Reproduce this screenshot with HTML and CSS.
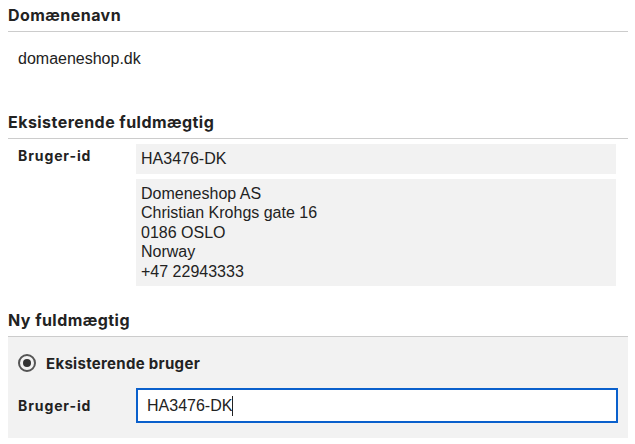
FILE: index.html
```html
<!DOCTYPE html>
<html lang="da">
<head>
    <meta charset="UTF-8">
    <meta name="viewport" content="width=device-width, initial-scale=1.0">
    <title>Skift fuldmægtig</title>
    <link rel="stylesheet" href="styles.css">
</head>
<body>
    <div class="container">
        <h2>Domænenavn</h2>
        <p class="domain">domaeneshop.dk</p>

        <h2>Eksisterende fuldmægtig</h2>
        <div class="row">
            <div class="label">Bruger-id</div>
            <div class="values">
                <div class="box">HA3476-DK</div>
                <div class="box">
                    Domeneshop AS<br>
                    Christian Krohgs gate 16<br>
                    0186 OSLO<br>
                    Norway<br>
                    +47 22943333
                </div>
            </div>
        </div>

        <h2>Ny fuldmægtig</h2>
        <div class="panel">
            <label class="radio">
                <span class="dot"></span>
                Eksisterende bruger
            </label>
            <div class="row">
                <div class="label">Bruger-id</div>
                <div class="field"><span>HA3476-DK</span><span class="caret"></span></div>
            </div>
        </div>
    </div>
</body>
</html>
```

FILE: styles.css
```css
body {
    margin: 0;
    font-family: 'Liberation Sans', Arial, sans-serif;
    font-size: 16px;
    color: #222;
    background: white;
}
.container {
    width: 620px;
    margin-left: 8px;
}
h2 {
    font-family: 'Inter', 'DejaVu Sans', sans-serif;
    font-size: 16px;
    font-weight: 700;
    letter-spacing: 0.45px;
    line-height: 20px;
    margin: 0;
    padding: 5px 0 6px;
    border-bottom: 1px solid #cccccc;
}
.domain {
    margin: 0 0 38px;
    padding: 17px 10px 0;
    line-height: 20px;
}
.row {
    display: flex;
    padding-left: 10px;
}
.label {
    width: 118px;
    flex-shrink: 0;
    font-family: 'Inter', 'DejaVu Sans', sans-serif;
    font-size: 14px;
    font-weight: 700;
    letter-spacing: 0.9px;
    padding-top: 8px;
}
.values {
    width: 480px;
    display: flex;
    flex-direction: column;
    gap: 5px;
    margin: 5px 0 19px;
}
.box {
    background: #f2f2f2;
    padding: 5px;
    line-height: 19.5px;
}
.panel {
    background: #f2f2f2;
    padding: 15px 0;
    display: flex;
    flex-direction: column;
    gap: 14px;
}
.radio {
    display: flex;
    align-items: center;
    gap: 10px;
    height: 22px;
    padding-left: 10px;
    font-family: 'Inter', 'DejaVu Sans', sans-serif;
    font-size: 15px;
    font-weight: 700;
    letter-spacing: 0.3px;
}
.dot {
    width: 14px;
    height: 14px;
    border: 2px solid #555;
    border-radius: 50%;
    display: flex;
    align-items: center;
    justify-content: center;
}
.dot::after {
    content: "";
    width: 8px;
    height: 8px;
    border-radius: 50%;
    background: #333;
}
.panel .row > .label {
    padding-top: 9px;
}
.field {
    width: 460px;
    height: 31px;
    border: 2px solid #0a60cc;
    background: white;
    padding: 0 9px;
    display: flex;
    align-items: center;
    font-size: 16px;
}
.caret {
    width: 1px;
    height: 20px;
    background: #222;
}
```
